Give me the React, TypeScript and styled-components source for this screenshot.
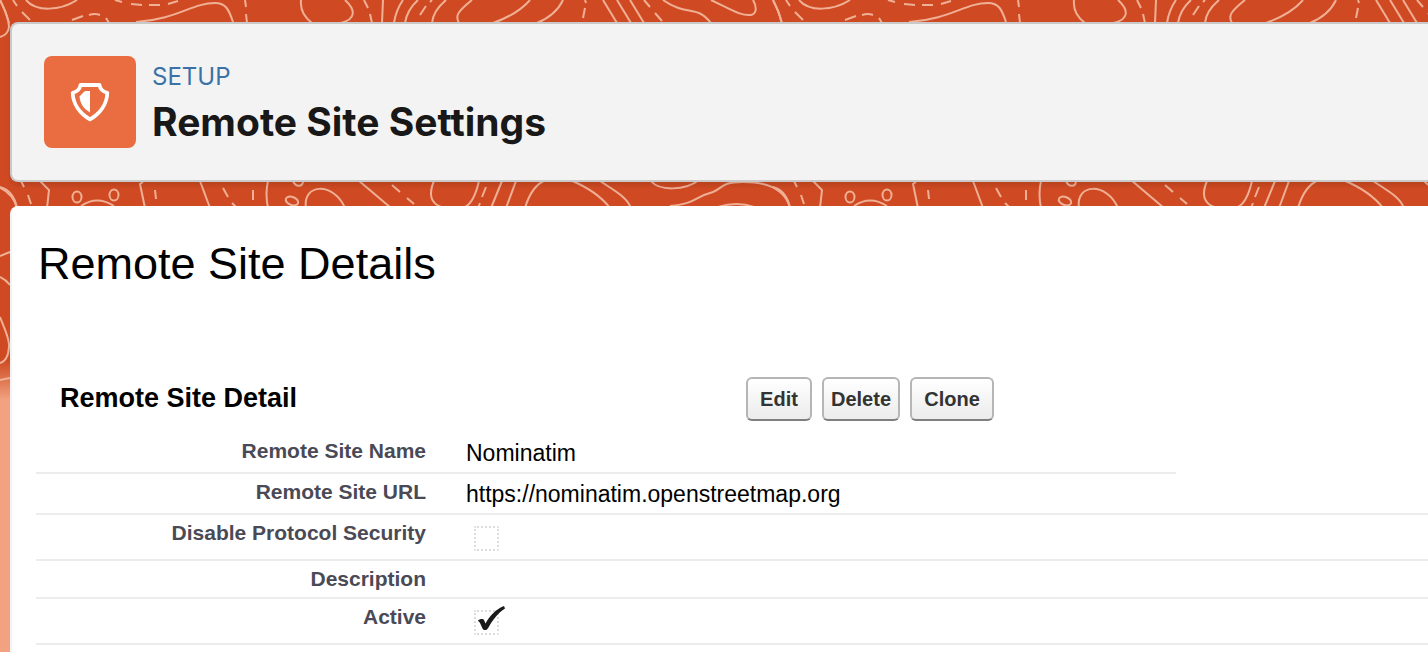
import React from "react";
import styled, { createGlobalStyle } from "styled-components";

const GlobalStyle = createGlobalStyle`
  *, *::before, *::after { box-sizing: border-box; }
  body {
    margin: 0;
    background: #f2a281;
    font-family: "Liberation Sans", Arial, sans-serif;
    color: #000;
  }
`;

const Page = styled.div`
  position: relative;
  min-height: 100vh;
  overflow: hidden;
  padding: 22px 0 0 10px;
  display: flex;
  flex-direction: column;
  gap: 24px;
`;

const Backdrop = styled.svg`
  position: absolute;
  top: 0;
  left: 0;
  width: 100%;
  height: 400px;
`;

const PageHeader = styled.header`
  position: relative;
  display: flex;
  align-items: flex-start;
  gap: 16px;
  padding: 32px;
  border: 2px solid #c9c9c9;
  border-right: 0;
  border-radius: 8px 0 0 8px;
  background: #f3f3f3;
  box-shadow: 0 4px 4px rgba(0, 0, 0, 0.1);
`;

const IconTile = styled.div`
  display: flex;
  align-items: center;
  justify-content: center;
  width: 92px;
  height: 92px;
  border-radius: 8px;
  background: #ea6d41;
`;

const Heading = styled.div`
  display: flex;
  flex-direction: column;
  font-family: Inter, sans-serif;
`;

const Eyebrow = styled.span`
  font-size: 24px;
  line-height: 42px;
  color: #3a72a8;
`;

const PageTitle = styled.h1`
  margin: 0;
  font-size: 39px;
  line-height: 48px;
  font-weight: 700;
  color: #181818;
`;

const Panel = styled.main`
  position: relative;
  flex: 1;
  padding: 32px 0 0 24px;
  border-left: 2px solid #f3f3f3;
  border-radius: 8px 0 0 0;
  background: #fff;
`;

const PanelTitle = styled.h2`
  margin: 0;
  padding-left: 2px;
  font-size: 45px;
  line-height: 52px;
  font-weight: 400;
`;

const SectionBar = styled.div`
  display: flex;
  align-items: center;
  height: 44px;
  margin-top: 87px;
`;

const SectionTitle = styled.h3`
  flex: none;
  width: 710px;
  margin: 0;
  padding: 0 0 2px 24px;
  font-size: 27px;
  line-height: 32px;
  font-weight: 700;
`;

const Actions = styled.div`
  display: flex;
  gap: 10px;
`;

const ActionButton = styled.button<{ $width: number }>`
  width: ${(p) => p.$width}px;
  height: 44px;
  padding: 0;
  border: 2px solid #b5b5b5;
  border-bottom-color: #7f7f7f;
  border-radius: 6px;
  background: linear-gradient(#fff, #f5f5f5 50%, #ececec);
  font: 700 20px/24px "Liberation Sans", Arial, sans-serif;
  color: #333;
`;

const DetailTable = styled.table`
  width: 100%;
  margin-top: 12px;
  table-layout: fixed;
  border-collapse: separate;
  border-spacing: 0;
`;

const LabelColumn = styled.col`
  width: 410px;
`;

const ValueColumn = styled.col`
  width: 730px;
`;

const Row = styled.tr<{ $height: number }>`
  height: ${(p) => p.$height}px;
`;

const LabelCell = styled.th`
  padding: 6px 20px 0 0;
  border-bottom: 2px solid #ececec;
  text-align: right;
  vertical-align: top;
  font-size: 21px;
  line-height: 24px;
  font-weight: 700;
  color: #4a4a56;
`;

const ValueCell = styled.td`
  padding: 7px 0 0 20px;
  border-bottom: 2px solid #ececec;
  vertical-align: top;
  font-size: 23px;
  line-height: 26px;
`;

const TickHolder = styled.span`
  position: relative;
  display: block;
  width: 25px;
  height: 25px;
  margin: 4px 0 0 8px;
`;

const TickBox = styled.input`
  appearance: none;
  display: block;
  width: 25px;
  height: 25px;
  margin: 0;
  border: 2px dotted #dcdcdc;
  border-radius: 2px;
  background: #fff;
`;

const TickMark = styled.svg`
  position: absolute;
  left: 3px;
  top: -4px;
`;

const REPEAT = 773;

const solidLines = [
  "M0 0C5 10 9 20 9 27Q8 35 0 37",
  "M26 0C36 12 60 11 77 0",
  "M136 22C178 19 192 3 215 3C226 3 229 10 233 22",
  "M301 0C300 10 305 18 312 23",
  "M341 23C356 19 356 10 345 0",
  "M383 0L382 23",
  "M403 0Q396 10 394 23",
  "M418 0Q407 10 405 23",
  "M446 0Q433 11 432 23",
  "M472 0C457 12 455 16 459 23",
  "M530 0Q518 14 493 23",
  "M563 0Q556 15 537 23",
  "M603 0L617 23",
  "M617 0L631 23",
  "M630 0L644 23",
  "M663 0C687 17 696 4 711 23",
  "M711 0C732 10 741 16 751 15C758 13 756 5 753 0",
  "M773 0Q779 11 782 23",
  "M0 187C11 190 15 198 17 208",
  "M40 181L49 190L47 208",
  "M81 206Q97 195 114 206",
  "M143 182L140 184L145 208",
  "M200 181L210 208",
  "M268 181Q265 194 268 208",
  "M293 181C296 188 304 187 303 180",
  "M306 208C302 183 334 182 345 208",
  "M358 180L391 208",
  "M434 181C428 195 431 203 441 207",
  "M479 181C476 194 471 204 465 207",
  "M502 181L491 208",
  "M516 181L506 208",
  "M525 208C530 191 538 183 546 180",
  "M570 180Q597 191 610 208",
  "M600 181C620 194 627 198 631 208",
  "M651 181C659 191 685 191 699 180",
  "M670 206C698 203 694 197 713 192C723 188 721 182 743 182C768 182 785 189 790 208",
  "M718 207Q737 201 754 207",
];

const dashedLines = [
  "M13 0L17 6M22 12L30 20",
  "M72 20L83 16M89 15Q95 13 100 15M106 18L109 23",
  "M115 0L122 2M131 4L142 5M149 5L160 5M168 4L178 1",
  "M245 0L246 7M246 14L247 23",
  "M364 0L368 8M370 14L372 23",
  "M426 6L420 15M432 0L430 2",
  "M585 0L586 3M585 8L583 18",
  "M644 0L650 7M655 13L662 21",
  "M21 181L24 187M28 195L31 204",
  "M155 190L156 199M223 188L228 197M232 203L237 208",
  "M253 190L253 200M392 185L400 192M407 198L414 204",
  "M486 187L482 197M480 203L478 208",
];

const edgeLines =
  "M0 256L10 252M0 277Q6 280 10 285M0 317C4 328 10 339 9 347Q8 361 0 363M0 380L10 378";

function Contours() {
  return (
    <Backdrop aria-hidden="true">
      <defs>
        <linearGradient id="fade" x1="0" y1="0" x2="0" y2="1">
          <stop offset="0" stopColor="#cf4a22" />
          <stop offset="0.9" stopColor="#cf4a22" />
          <stop offset="0.96" stopColor="#e27e59" />
          <stop offset="1" stopColor="#f2a281" />
        </linearGradient>
        <g id="contours" fill="none" stroke="#f0b096" strokeWidth="2">
          {[...solidLines, ...dashedLines].map((d) => (
            <path key={d} d={d} />
          ))}
          <ellipse cx="77" cy="197" rx="4.5" ry="5.5" />
          <ellipse cx="114" cy="195" rx="4.5" ry="5.5" />
          <ellipse cx="292" cy="201" rx="6.5" ry="4" transform="rotate(20 292 201)" />
        </g>
      </defs>
      <rect width="100%" height="400" fill="url(#fade)" />
      {[-1, 0, 1, 2, 3].map((n) => (
        <use key={n} href="#contours" x={n * REPEAT} />
      ))}
      <path d={edgeLines} fill="none" stroke="#f0b096" strokeWidth="2" />
    </Backdrop>
  );
}

function ShieldIcon() {
  return (
    <svg width="40" height="40" viewBox="0 0 40 40" aria-hidden="true">
      <path
        d="M10.500 3H29.500Q30 6.500 32 8Q34 10 37.300 10.800C37 22 30 31.500 20 37.300C10 31.500 3 22 2.700 10.800Q6 10 8 8Q10 6.500 10.500 3Z"
        fill="none"
        stroke="#fff"
        strokeWidth="3.800"
        strokeLinejoin="round"
      />
      <path d="M20 9V30.500C14 27 10.200 22 9.500 14.500L14 9.800Q15 9 16 9Z" fill="#fff" />
    </svg>
  );
}

function Tick({ id, checked }: { id: string; checked: boolean }) {
  return (
    <TickHolder>
      <TickBox id={id} type="checkbox" checked={checked} readOnly />
      {checked && (
        <TickMark width="30" height="28" viewBox="0 0 30 28" aria-hidden="true">
          <path
            d="M1 14.500C3 12.500 6 12.500 7 14L8.500 17.500C13 9.500 19 3 27 0L28 2.500C21 7 15.500 14 11.500 21.500C10 24.500 7 25 5.500 22.500L3 17C2.500 16 1.500 15.500 1 14.500Z"
            fill="#1a1a1a"
          />
        </TickMark>
      )}
    </TickHolder>
  );
}

export default function App() {
  return (
    <>
      <GlobalStyle />
      <Page>
        <Contours />
        <PageHeader>
          <IconTile>
            <ShieldIcon />
          </IconTile>
          <Heading>
            <Eyebrow>SETUP</Eyebrow>
            <PageTitle>Remote Site Settings</PageTitle>
          </Heading>
        </PageHeader>
        <Panel>
          <PanelTitle>Remote Site Details</PanelTitle>
          <SectionBar>
            <SectionTitle>Remote Site Detail</SectionTitle>
            <Actions>
              <ActionButton type="button" $width={66}>Edit</ActionButton>
              <ActionButton type="button" $width={78}>Delete</ActionButton>
              <ActionButton type="button" $width={84}>Clone</ActionButton>
            </Actions>
          </SectionBar>
          <DetailTable>
            <colgroup>
              <LabelColumn />
              <ValueColumn />
              <col />
            </colgroup>
            <tbody>
              <Row $height={41}>
                <LabelCell scope="row">Remote Site Name</LabelCell>
                <ValueCell>Nominatim</ValueCell>
              </Row>
              <Row $height={41}>
                <LabelCell scope="row">Remote Site URL</LabelCell>
                <ValueCell colSpan={2}>https://nominatim.openstreetmap.org</ValueCell>
              </Row>
              <Row $height={46}>
                <LabelCell scope="row">
                  <label htmlFor="disable-security">Disable Protocol Security</label>
                </LabelCell>
                <ValueCell colSpan={2}>
                  <Tick id="disable-security" checked={false} />
                </ValueCell>
              </Row>
              <Row $height={38}>
                <LabelCell scope="row">Description</LabelCell>
                <ValueCell colSpan={2} />
              </Row>
              <Row $height={46}>
                <LabelCell scope="row">
                  <label htmlFor="active">Active</label>
                </LabelCell>
                <ValueCell colSpan={2}>
                  <Tick id="active" checked />
                </ValueCell>
              </Row>
            </tbody>
          </DetailTable>
        </Panel>
      </Page>
    </>
  );
}
